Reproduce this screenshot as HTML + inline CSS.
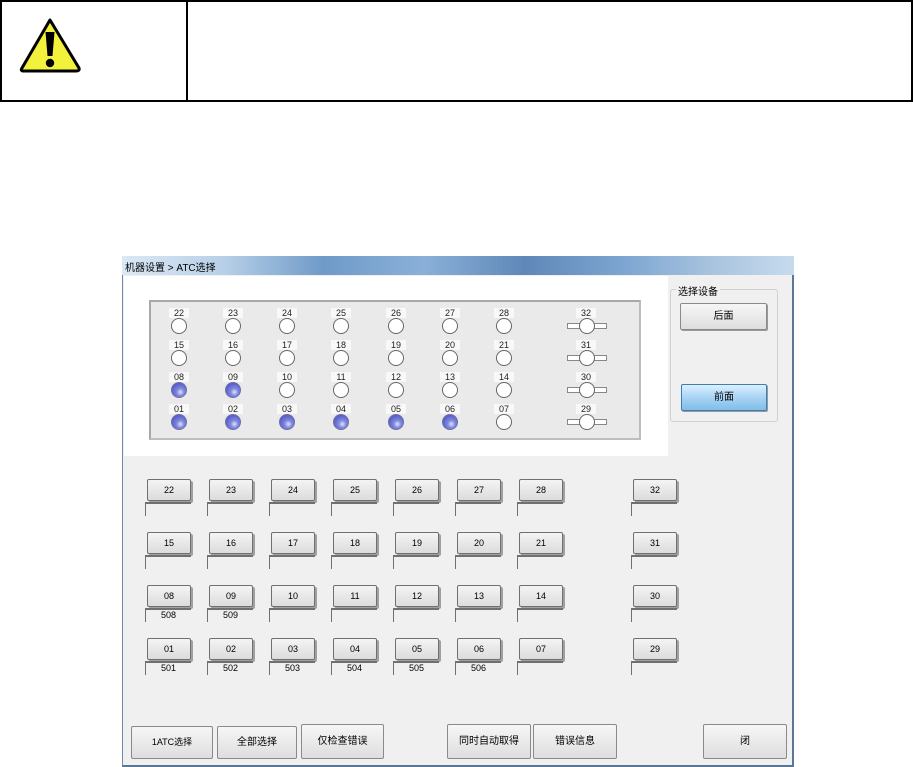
<!DOCTYPE html>
<html><head><meta charset="utf-8"><style>
*{margin:0;padding:0;box-sizing:border-box}
body{width:913px;height:767px;background:#fff;position:relative;overflow:hidden;font-family:"Liberation Sans","Noto Sans CJK SC",sans-serif}
.a{position:absolute}
.top{left:0;top:0;width:913px;height:102px;border:2px solid #000}
.div{left:186px;top:0;width:2px;height:102px;background:#000}
.win{left:122px;top:256px;width:672px;height:511px;background:#f0f0f0;border-left:1px solid #6f8aa8;border-right:2px solid #5b7694;border-bottom:2px solid #5b7694}
.title{left:122px;top:256px;width:672px;height:19px;background:linear-gradient(90deg,#dbe8f5 0%,#b8d0e8 15%,#6f9ac8 30%,#8ab0d8 45%,#5f88b8 60%,#7ea6d2 75%,#a9c4de 88%,#c7dbee 100%);font-size:10px;color:#000;padding:3px 0 0 3px}
.white{left:124px;top:276px;width:544px;height:180px;background:#fff}
.panel{left:149px;top:300px;width:492px;height:140px;background:#eaeaea;border:2px solid #a8a8a8;border-right-color:#bdbdbd;border-bottom-color:#bdbdbd}
.lb{font-size:9px;width:20px;text-align:center;background:#f8f8f8;line-height:10px;color:#222}
.c{width:16px;height:16px;border-radius:50%;background:#fff;border:1px solid #666}
.cb{background:radial-gradient(circle at 60% 65%,#e0e4ff 0,#8088e0 30%,#5a60c8 70%);border-color:#6a70a8}
.bar{width:40px;height:6px;background:#fff;border:1px solid #888}
.btn{width:44px;height:22px;background:linear-gradient(#f4f4f4,#dcdcdc);border:1px solid #707070;border-radius:2px;font-size:9px;text-align:center;line-height:20px;box-shadow:2px 2px 0 #a0a0a0}
.box{width:46px;height:14px;border-top:2px solid #707070;border-left:1px solid #707070;background:#f0f0f0;font-size:9px;text-align:center;line-height:11px}
.bb{height:33px;background:linear-gradient(#f6f6f6,#dedede);border:1px solid #8a8a8a;border-radius:2px;font-size:10px;text-align:center;line-height:31px}
.grp{left:670px;top:289px;width:108px;height:133px;border:1px solid #d0d0d0;border-radius:3px}
</style></head><body>
<div class="a top"></div><div class="a div"></div>
<svg class="a" style="left:18px;top:17px" width="64" height="56" viewBox="0 0 64 56"><path d="M32 3 L61 51 Q62 54 58 54 L6 54 Q2 54 4 51 Z" fill="#f2f23c" stroke="#000" stroke-width="3" stroke-linejoin="round"/><path d="M27.5 15 L36.5 15 L34.5 39 L29.5 39 Z" fill="#000"/><circle cx="32" cy="46" r="4.2" fill="#000"/></svg>

<div class="a win"></div>
<div class="a title">机器设置 &gt; ATC选择</div>
<div class="a white"></div>
<div class="a panel"></div>

<div class="a lb" style="left:169px;top:308px">22</div><div class="a c" style="left:171px;top:318px"></div>
<div class="a lb" style="left:223px;top:308px">23</div><div class="a c" style="left:225px;top:318px"></div>
<div class="a lb" style="left:277px;top:308px">24</div><div class="a c" style="left:279px;top:318px"></div>
<div class="a lb" style="left:331px;top:308px">25</div><div class="a c" style="left:333px;top:318px"></div>
<div class="a lb" style="left:386px;top:308px">26</div><div class="a c" style="left:388px;top:318px"></div>
<div class="a lb" style="left:440px;top:308px">27</div><div class="a c" style="left:442px;top:318px"></div>
<div class="a lb" style="left:494px;top:308px">28</div><div class="a c" style="left:496px;top:318px"></div>
<div class="a lb" style="left:576px;top:308px">32</div><div class="a bar" style="left:567px;top:323px"></div><div class="a c" style="left:579px;top:318px"></div>
<div class="a lb" style="left:169px;top:340px">15</div><div class="a c" style="left:171px;top:350px"></div>
<div class="a lb" style="left:223px;top:340px">16</div><div class="a c" style="left:225px;top:350px"></div>
<div class="a lb" style="left:277px;top:340px">17</div><div class="a c" style="left:279px;top:350px"></div>
<div class="a lb" style="left:331px;top:340px">18</div><div class="a c" style="left:333px;top:350px"></div>
<div class="a lb" style="left:386px;top:340px">19</div><div class="a c" style="left:388px;top:350px"></div>
<div class="a lb" style="left:440px;top:340px">20</div><div class="a c" style="left:442px;top:350px"></div>
<div class="a lb" style="left:494px;top:340px">21</div><div class="a c" style="left:496px;top:350px"></div>
<div class="a lb" style="left:576px;top:340px">31</div><div class="a bar" style="left:567px;top:355px"></div><div class="a c" style="left:579px;top:350px"></div>
<div class="a lb" style="left:169px;top:372px">08</div><div class="a c cb" style="left:171px;top:382px"></div>
<div class="a lb" style="left:223px;top:372px">09</div><div class="a c cb" style="left:225px;top:382px"></div>
<div class="a lb" style="left:277px;top:372px">10</div><div class="a c" style="left:279px;top:382px"></div>
<div class="a lb" style="left:331px;top:372px">11</div><div class="a c" style="left:333px;top:382px"></div>
<div class="a lb" style="left:386px;top:372px">12</div><div class="a c" style="left:388px;top:382px"></div>
<div class="a lb" style="left:440px;top:372px">13</div><div class="a c" style="left:442px;top:382px"></div>
<div class="a lb" style="left:494px;top:372px">14</div><div class="a c" style="left:496px;top:382px"></div>
<div class="a lb" style="left:576px;top:372px">30</div><div class="a bar" style="left:567px;top:387px"></div><div class="a c" style="left:579px;top:382px"></div>
<div class="a lb" style="left:169px;top:404px">01</div><div class="a c cb" style="left:171px;top:414px"></div>
<div class="a lb" style="left:223px;top:404px">02</div><div class="a c cb" style="left:225px;top:414px"></div>
<div class="a lb" style="left:277px;top:404px">03</div><div class="a c cb" style="left:279px;top:414px"></div>
<div class="a lb" style="left:331px;top:404px">04</div><div class="a c cb" style="left:333px;top:414px"></div>
<div class="a lb" style="left:386px;top:404px">05</div><div class="a c cb" style="left:388px;top:414px"></div>
<div class="a lb" style="left:440px;top:404px">06</div><div class="a c cb" style="left:442px;top:414px"></div>
<div class="a lb" style="left:494px;top:404px">07</div><div class="a c" style="left:496px;top:414px"></div>
<div class="a lb" style="left:576px;top:404px">29</div><div class="a bar" style="left:567px;top:419px"></div><div class="a c" style="left:579px;top:414px"></div>

<div class="a grp"></div>
<div class="a" style="left:676px;top:283px;font-size:10px;background:#f0f0f0;padding:0 2px">选择设备</div>
<div class="a bb" style="left:680px;top:303px;width:87px;height:27px;line-height:25px;box-shadow:1px 1px 0 #999">后面</div>
<div class="a bb" style="left:681px;top:384px;width:86px;height:27px;line-height:25px;background:linear-gradient(#dcefff,#a8d4f4 50%,#80bde8);border-color:#3c7fb1;box-shadow:1px 1px 0 #999">前面</div>

<div class="a btn" style="left:147px;top:479px">22</div><div class="a box" style="left:145px;top:502px"></div>
<div class="a btn" style="left:209px;top:479px">23</div><div class="a box" style="left:207px;top:502px"></div>
<div class="a btn" style="left:271px;top:479px">24</div><div class="a box" style="left:269px;top:502px"></div>
<div class="a btn" style="left:333px;top:479px">25</div><div class="a box" style="left:331px;top:502px"></div>
<div class="a btn" style="left:395px;top:479px">26</div><div class="a box" style="left:393px;top:502px"></div>
<div class="a btn" style="left:457px;top:479px">27</div><div class="a box" style="left:455px;top:502px"></div>
<div class="a btn" style="left:519px;top:479px">28</div><div class="a box" style="left:517px;top:502px"></div>
<div class="a btn" style="left:633px;top:479px">32</div><div class="a box" style="left:631px;top:502px"></div>

<div class="a btn" style="left:147px;top:532px">15</div><div class="a box" style="left:145px;top:555px"></div>
<div class="a btn" style="left:209px;top:532px">16</div><div class="a box" style="left:207px;top:555px"></div>
<div class="a btn" style="left:271px;top:532px">17</div><div class="a box" style="left:269px;top:555px"></div>
<div class="a btn" style="left:333px;top:532px">18</div><div class="a box" style="left:331px;top:555px"></div>
<div class="a btn" style="left:395px;top:532px">19</div><div class="a box" style="left:393px;top:555px"></div>
<div class="a btn" style="left:457px;top:532px">20</div><div class="a box" style="left:455px;top:555px"></div>
<div class="a btn" style="left:519px;top:532px">21</div><div class="a box" style="left:517px;top:555px"></div>
<div class="a btn" style="left:633px;top:532px">31</div><div class="a box" style="left:631px;top:555px"></div>

<div class="a btn" style="left:147px;top:585px">08</div><div class="a box" style="left:145px;top:608px">508</div>
<div class="a btn" style="left:209px;top:585px">09</div><div class="a box" style="left:207px;top:608px">509</div>
<div class="a btn" style="left:271px;top:585px">10</div><div class="a box" style="left:269px;top:608px"></div>
<div class="a btn" style="left:333px;top:585px">11</div><div class="a box" style="left:331px;top:608px"></div>
<div class="a btn" style="left:395px;top:585px">12</div><div class="a box" style="left:393px;top:608px"></div>
<div class="a btn" style="left:457px;top:585px">13</div><div class="a box" style="left:455px;top:608px"></div>
<div class="a btn" style="left:519px;top:585px">14</div><div class="a box" style="left:517px;top:608px"></div>
<div class="a btn" style="left:633px;top:585px">30</div><div class="a box" style="left:631px;top:608px"></div>

<div class="a btn" style="left:147px;top:638px">01</div><div class="a box" style="left:145px;top:661px">501</div>
<div class="a btn" style="left:209px;top:638px">02</div><div class="a box" style="left:207px;top:661px">502</div>
<div class="a btn" style="left:271px;top:638px">03</div><div class="a box" style="left:269px;top:661px">503</div>
<div class="a btn" style="left:333px;top:638px">04</div><div class="a box" style="left:331px;top:661px">504</div>
<div class="a btn" style="left:395px;top:638px">05</div><div class="a box" style="left:393px;top:661px">505</div>
<div class="a btn" style="left:457px;top:638px">06</div><div class="a box" style="left:455px;top:661px">506</div>
<div class="a btn" style="left:519px;top:638px">07</div><div class="a box" style="left:517px;top:661px"></div>
<div class="a btn" style="left:633px;top:638px">29</div><div class="a box" style="left:631px;top:661px"></div>

<div class="a bb" style="left:131px;top:726px;width:82px;font-size:9px">1ATC选择</div>
<div class="a bb" style="left:217px;top:726px;width:80px">全部选择</div>
<div class="a bb" style="left:301px;top:724px;width:83px;height:35px;line-height:33px">仅检查错误</div>
<div class="a bb" style="left:447px;top:724px;width:84px;height:35px;line-height:33px">同时自动取得</div>
<div class="a bb" style="left:533px;top:724px;width:84px;height:35px;line-height:33px">错误信息</div>
<div class="a bb" style="left:703px;top:724px;width:84px;height:35px;line-height:33px">闭</div>
</body></html>
